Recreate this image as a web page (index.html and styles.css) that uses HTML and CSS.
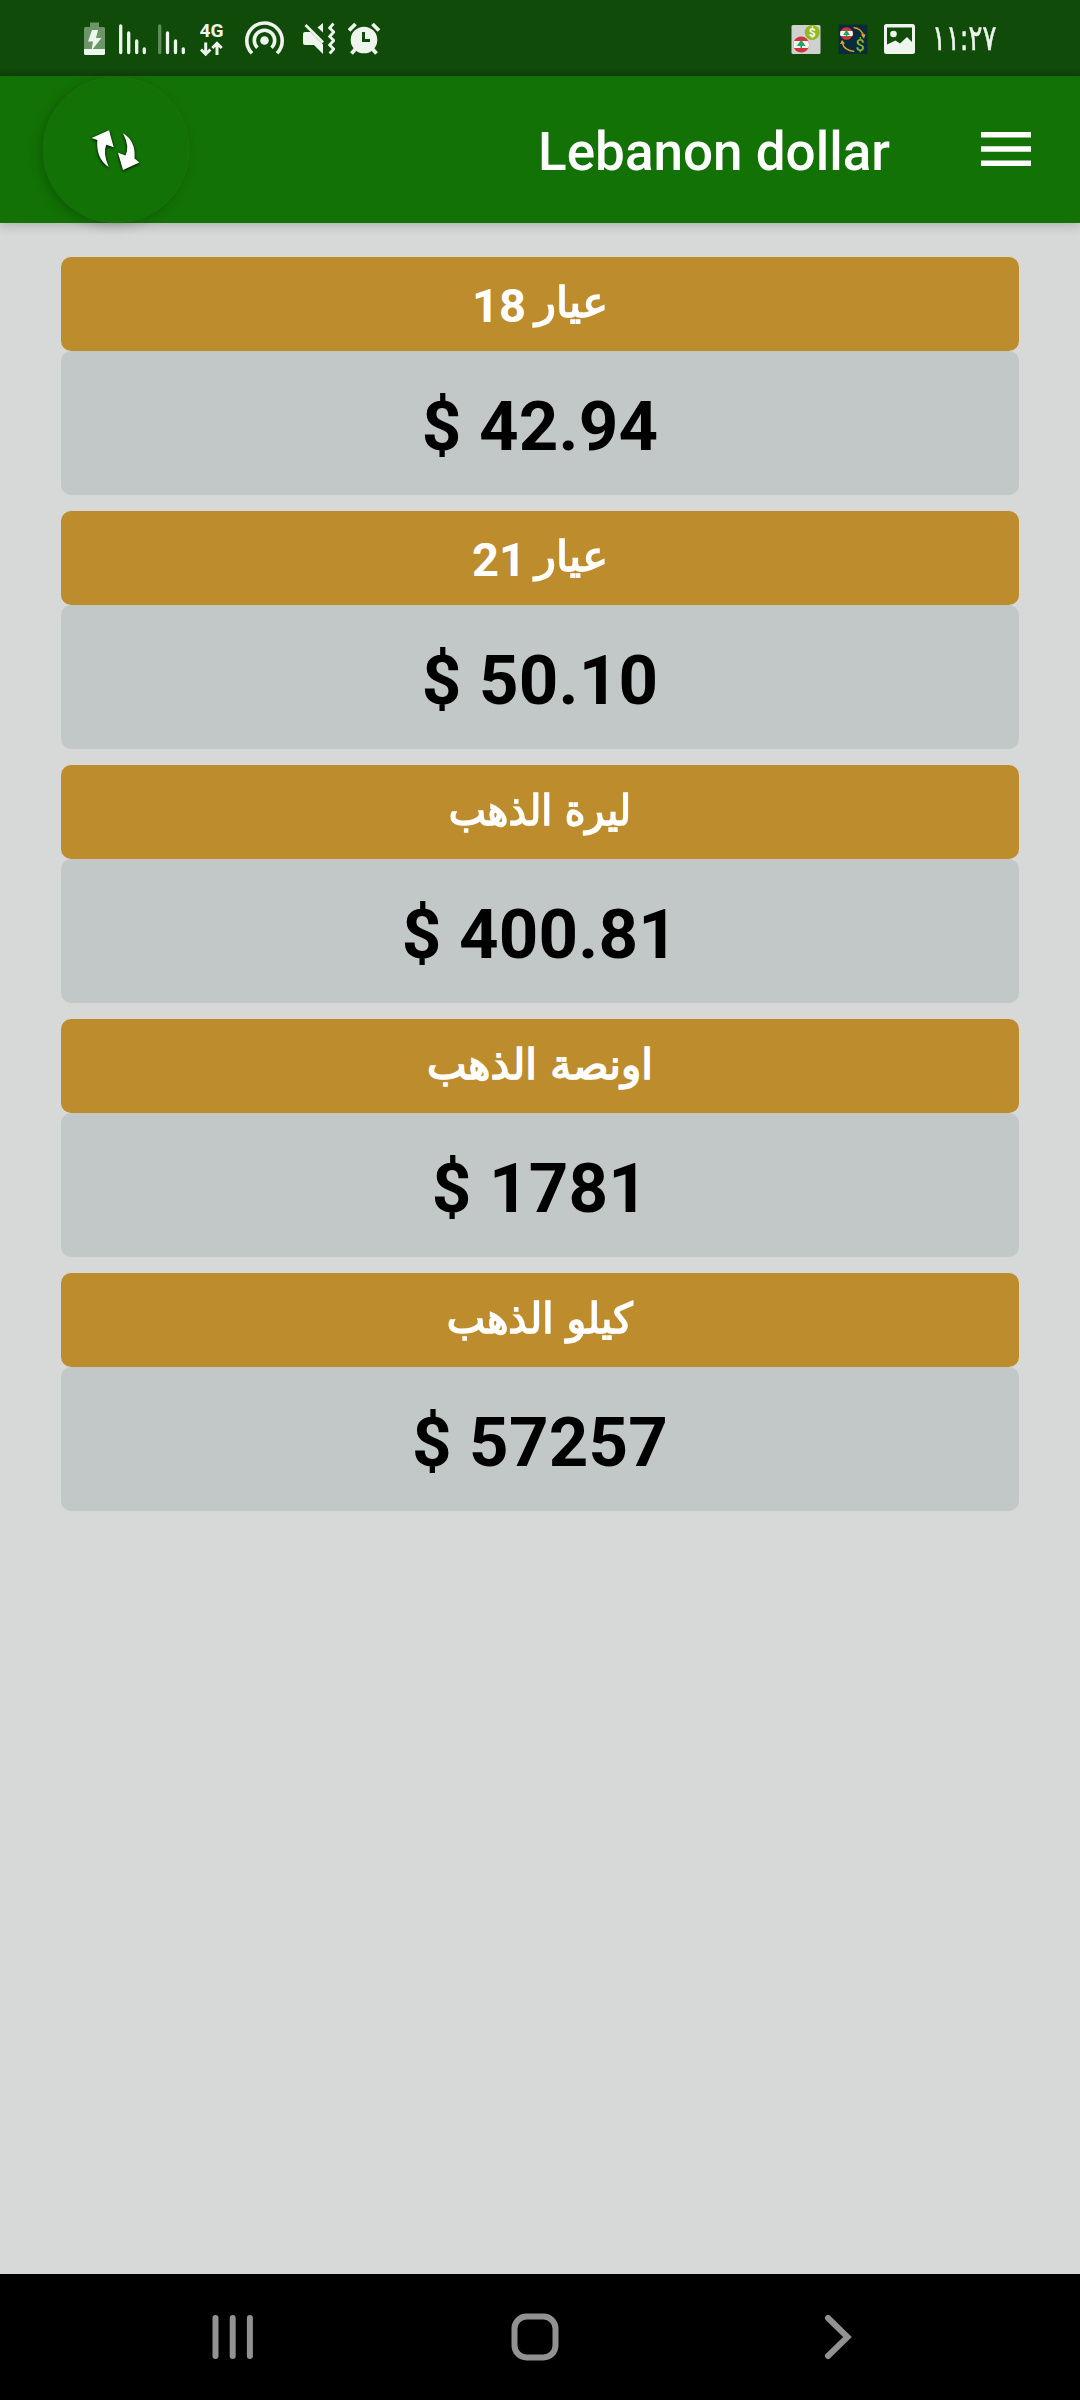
FILE: index.html
```html
<!DOCTYPE html>
<html lang="ar">
<head>
<meta charset="utf-8">
<title>Lebanon dollar</title>
<link rel="stylesheet" href="styles.css">
</head>
<body>
<div class="screen">
  <div class="status">
    <div class="status-group">
      <svg class="battery" width="21" height="40" viewBox="84 18 21 40">
        <path class="dim" d="M90 22.500h9V27h4.500q1.500 0 1.500 1.500V49H84V28.500Q84 27 85.500 27H90z"/>
        <path d="M84 49h21v4.500q0 1.500-1.500 1.500h-18Q84 55 84 53.500zM92 30h6l-2 8h5.500l-10 12.500 1.500-9h-5z"/>
      </svg>
      <svg class="signal" width="28" height="40" viewBox="119 18 28 40">
        <path class="bars" d="M120.700 26v26.500M128.700 33v19.500M136.700 41v11.500M144.300 49v3.500"/>
      </svg>
      <svg class="signal-2" width="28" height="40" viewBox="158 18 28 40">
        <path class="bars faint" d="M159.700 26v26.500"/>
        <path class="bars" d="M167.500 33v19.500M175.500 41v11.500M183.300 49v3.500"/>
      </svg>
      <svg class="network" width="24" height="40" viewBox="200 18 24 40">
        <text class="network-text" x="199.500" y="37.300" textLength="24" lengthAdjust="spacingAndGlyphs">4G</text>
        <path class="arrows" d="M205.700 42.500v11M201 49.500l4.700 4.700 4.700-4.700M217 55V44M212.300 48l4.700-4.700 4.700 4.700"/>
      </svg>
      <svg class="hotspot" width="40" height="40" viewBox="245 18 40 40">
        <circle cx="264.500" cy="40.500" r="4.300"/>
        <path class="rings" d="M257.500 47.800a10.200 10.200 0 1 1 14 0M252 53.200a17.700 17.700 0 1 1 25 0"/>
      </svg>
      <svg class="mute" width="32" height="40" viewBox="303 18 32 40">
        <path d="M303 34q0-2 2-2h5.500l12.500 12.500V54l-9-9h-9q-2 0-2-2zM323 23v9.500l-5.500-5z"/>
        <path class="thin" d="M305.500 25l17.500 17.500M333.500 23.500l-3.800 4.500 4 4-4 4.500 4 4-4 4.500 4 4-4 4.500"/>
      </svg>
      <svg class="alarm" width="33" height="40" viewBox="348 18 33 40">
        <circle cx="364" cy="40" r="13.300"/>
        <path class="thick" d="M349 30.500l6.500-6.500M379 30.500l-6.500-6.500M355.500 49l-4 4.500M372.500 49l4 4.500"/>
        <path class="hands" d="M363.500 32v8.500h6.500"/>
      </svg>
    </div>
    <div class="status-group">
      <svg class="note" width="30" height="40" viewBox="790.500 18 30 40">
        <rect class="tile" x="791" y="25" width="29" height="29" rx="1.500"/>
        <circle class="coin" cx="811.700" cy="32.500" r="7.500"/>
        <text class="coin-text" x="811.700" y="37" text-anchor="middle">$</text>
        <circle class="red" cx="800.700" cy="44.500" r="8"/>
        <path d="M793.500 41h14.400q1.200 3.500 0 7h-14.400q-1.200-3.500 0-7z"/>
        <path class="cedar" d="M800.700 39.500l4.300 6.500h-3.500v2h-1.600v-2h-3.500z"/>
      </svg>
      <svg class="note" width="30" height="40" viewBox="837.500 18 30 40">
        <rect class="navy" x="838" y="24.500" width="29" height="29.500"/>
        <circle class="red" cx="846" cy="33.500" r="6.300"/>
        <path d="M840 31h12q.8 2.500 0 5h-12q-.8-2.500 0-5z"/>
        <path class="cedar" d="M846 29.500l3.300 5.500h-2.500v2h-1.600v-2h-2.500z"/>
        <path class="orbit" d="M853 27.500q8.500 1 10 9M841.800 42.500q1.500 8 12 9"/>
        <path class="orange" d="M860.500 34.500l4.500-.2-1.500 4.500zM839.500 44l2-4 3 3.500z"/>
        <text class="dollar" x="859.500" y="51.300" text-anchor="middle">$</text>
      </svg>
      <svg class="picture" width="31" height="40" viewBox="884 18 31 40">
        <path fill-rule="evenodd" d="M886.500 24h26q2.500 0 2.500 2.500v25q0 2.500-2.500 2.500h-26q-2.500 0-2.500-2.500v-25q0-2.500 2.500-2.500zM887 27.500v17l8.500-4 4.500 3 7-6.500 5 5v-14.500z"/>
        <circle cx="893.500" cy="34" r="3.300"/>
      </svg>
      <span class="time"><bdo class="time-text" dir="ltr">١١:٢٧</bdo></span>
    </div>
  </div>

  <div class="appbar">
    <button class="refresh" aria-label="Refresh">
      <svg class="refresh-icon" width="52" height="46" viewBox="90 126 52 46">
        <path d="M91.700 137L109 129.300 113.700 146.300 106.300 143.700Q102.500 152 108.700 166 96 158 97.300 139zM123 132.300Q136 140 134.500 157.500L139.300 161.500 123 169 118 151.700 125.500 154.500Q130 146 123 132.300z"/>
      </svg>
    </button>
    <div class="heading">
      <h1 class="title">Lebanon dollar</h1>
      <svg class="menu" width="50" height="34" viewBox="0 0 50 34"><path d="M0 0h50v5.500H0zM0 14.200h50v5.500H0zM0 28.400h50v5.500H0z"/></svg>
    </div>
  </div>

  <main class="list">
    <section class="card"><h2 class="label" dir="rtl"><span class="ar w1">عيار</span> 18</h2><p class="price">$ 42.94</p></section>
    <section class="card"><h2 class="label" dir="rtl"><span class="ar w1">عيار</span> 21</h2><p class="price">$ 50.10</p></section>
    <section class="card"><h2 class="label" dir="rtl"><span class="ar w2">ليرة الذهب</span></h2><p class="price">$ 400.81</p></section>
    <section class="card"><h2 class="label" dir="rtl"><span class="ar w3">اونصة الذهب</span></h2><p class="price">$ 1781</p></section>
    <section class="card"><h2 class="label" dir="rtl"><span class="ar w4">كيلو الذهب</span></h2><p class="price">$ 57257</p></section>
  </main>

  <nav class="nav">
    <svg width="42" height="48" viewBox="0 0 42 48"><path d="M3.500 5v38M20.700 5v38M37.900 5v38"/></svg>
    <svg class="home" width="48" height="48" viewBox="0 0 48 48"><rect x="3.500" y="3.500" width="41" height="41" rx="12"/></svg>
    <svg width="28" height="48" viewBox="0 0 28 48"><path d="M4 5l19.500 19L4 43"/></svg>
  </nav>
</div>
</body>
</html>
```
FILE: styles.css
```css
* { box-sizing: border-box; }
body { margin: 0; font-family: Roboto, "DejaVu Sans", sans-serif; }
svg { display: block; flex: none; }
.screen { display: flex; flex-direction: column; width: 1080px; height: 2400px; background: #d7d9d8; overflow: hidden; }

.status { display: flex; justify-content: space-between; height: 76px; padding: 18px 84px 0; background: linear-gradient(#114b0a 68px, #10410b 76px); fill: #edf5ec; }
.status-group { display: flex; }
.dim { fill: #6c9668; }
.bars { stroke: #edf5ec; stroke-width: 3.300; stroke-linecap: round; }
.faint { stroke: #5f8d5a; }
.signal { margin-left: 14px; }
.signal-2 { margin-left: 11px; }
.network { margin-left: 14px; }
.network-text { font-size: 19px; font-weight: 700; }
.arrows, .rings, .thin, .thick { fill: none; stroke: #edf5ec; stroke-width: 3; }
.hotspot { margin-left: 21px; }
.rings { stroke-width: 3.600; }
.mute { margin-left: 18px; }
.thin { stroke-width: 2.800; }
.alarm { margin-left: 13px; }
.thick { stroke-width: 3.800; }
.hands { fill: none; stroke: #114b0a; stroke-width: 3; }
.tile { fill: #cfd1d1; }
.coin { fill: #94b91f; }
.coin-text { font-size: 12px; font-weight: 900; }
.red { fill: #d3343c; }
.cedar { fill: #25a266; }
.navy { fill: #082c3a; }
.orbit { fill: none; stroke: #d99a2e; stroke-width: 1.500; }
.orange { fill: #e9a12c; }
.dollar { font-size: 16px; font-weight: 500; fill: #86b32e; }
.note { margin-right: 17px; }
.picture { margin-right: 17px; margin-left: -.5px; }
.time { width: 64px; height: 40px; font: 32px/40px "DejaVu Sans", sans-serif; color: #edf5ec; white-space: nowrap; }
.time-text { display: inline-block; transform: scale(.81, 1.1); transform-origin: 0 50%; -webkit-text-stroke: .5px #edf5ec; }

.appbar { position: relative; z-index: 1; display: flex; align-items: center; justify-content: space-between; height: 147px; padding: 0 49px 0 43px; background: #127205; box-shadow: 0 3px 10px rgba(0, 0, 0, .18); }
.refresh { display: flex; align-items: center; justify-content: center; width: 146px; height: 146px; padding: 0; border: 0; border-radius: 50%; background: #127205; box-shadow: -3px 3px 12px rgba(0, 0, 0, .2), 0 0 1px rgba(90, 150, 80, .6); clip-path: inset(0 -40px -40px -40px); }
.refresh-icon { fill: #fff; filter: drop-shadow(0 1px 1.500px #000); overflow: visible; }
.heading { display: flex; align-items: center; gap: 91px; }
.title { margin: 4px 0 0; color: #fff; font-size: 53px; font-weight: 500; line-height: 62px; white-space: nowrap; }
.menu { margin-bottom: 1px; fill: #fff; }

.list { flex: 1; display: flex; flex-direction: column; gap: 16px; padding: 34px 61px 0; }
.label { display: flex; align-items: center; justify-content: center; gap: 9px; height: 94px; margin: 0; padding-top: 2px; border-radius: 10px; background: #bd8d2d; color: #fff; font-size: 47px; font-weight: 700; }
.ar { display: flex; justify-content: center; font-family: "DejaVu Sans", sans-serif; font-size: 42px; font-weight: 400; line-height: 60px; margin-bottom: 5px; white-space: nowrap; -webkit-text-stroke: 1.600px #fff; }
.w1 { width: 73px; transform: scaleX(1.03); }
.w2 { transform: scaleX(.94); }
.w4 { transform: scaleX(.97); }
.price { height: 144px; margin: 0; border-radius: 10px; background: #c2c7c7; color: #000; font-size: 69px; font-weight: 700; letter-spacing: .2px; line-height: 152px; text-align: center; }

.nav { display: flex; align-items: center; justify-content: space-between; height: 126px; padding: 0 228px 0 212px; background: #000; fill: none; stroke: #929292; stroke-width: 6; stroke-linecap: round; }
.home { margin-right: 8px; }
```
